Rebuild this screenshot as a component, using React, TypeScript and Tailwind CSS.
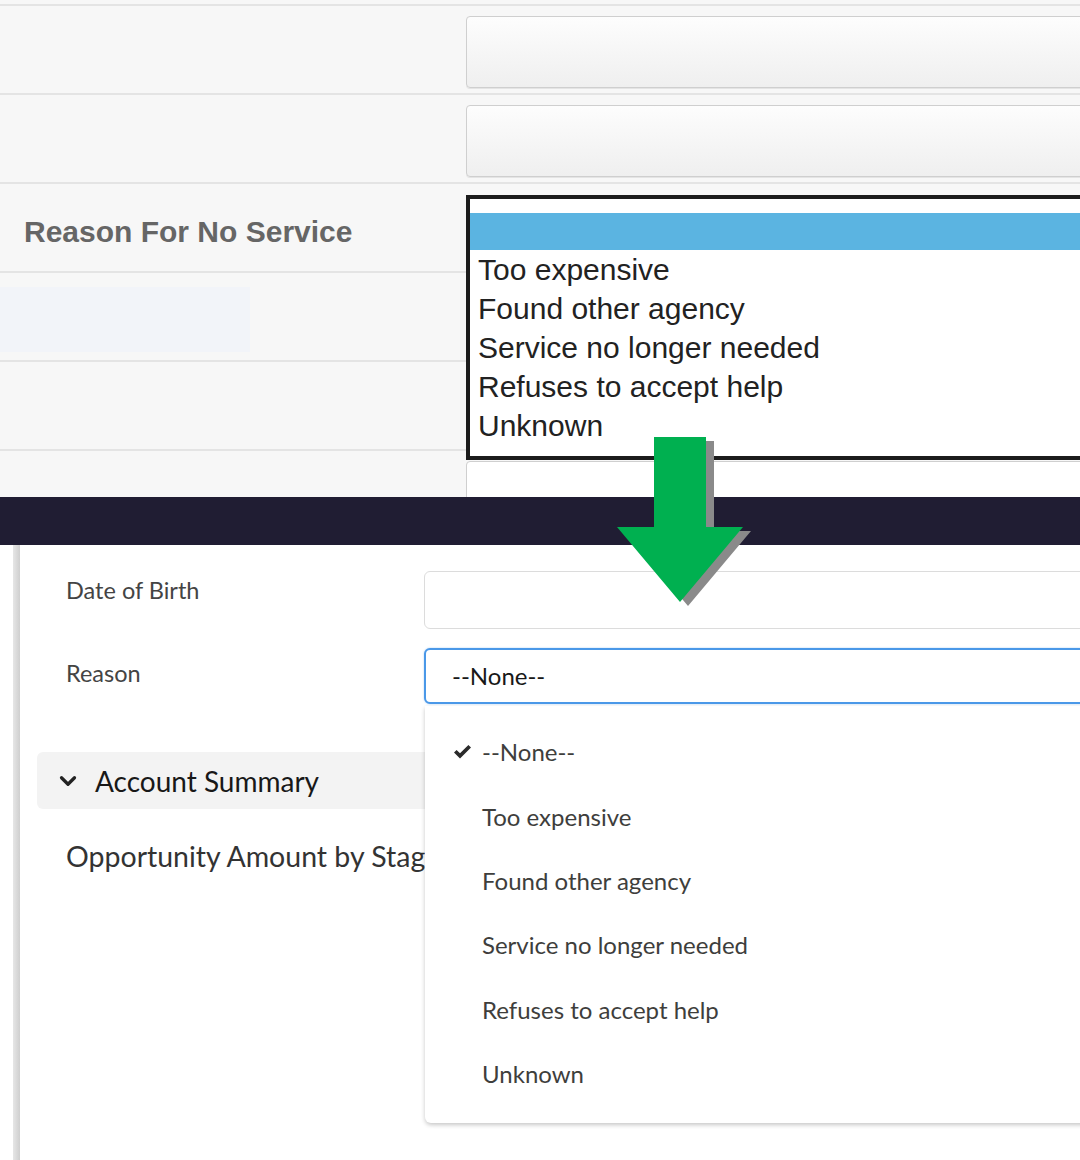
import { ChevronDown } from "lucide-react"

const legacyOptions = ["Too expensive", "Found other agency", "Service no longer needed", "Refuses to accept help", "Unknown"]

function LegacyInput({ white = false }: { white?: boolean }) {
  return (
    <div
      className={`h-[72px] w-[700px] rounded-[4px] border border-[#cfcfcf] shadow-[0_1px_0_#e4e4e4] ${
        white ? "bg-white" : "bg-gradient-to-b from-[#fdfdfd] to-[#efefef]"
      }`}
    />
  )
}

function LegacyRow({ children, label, h = "h-[89px]", last = false }: { children?: React.ReactNode; label?: React.ReactNode; h?: string; last?: boolean }) {
  return (
    <div className={`flex ${h} ${last ? "" : "border-b-2 border-[#e4e4e4]"} overflow-hidden bg-[#f7f7f7]`}>
      <div className="w-[466px] shrink-0">{label}</div>
      <div className="flex-1 pt-[10px]">{children}</div>
    </div>
  )
}

function LegacyForm() {
  return (
    <div className="relative h-[497px] overflow-hidden bg-[#f7f7f7] font-['Liberation_Sans',Arial,sans-serif]">
      <LegacyRow h="h-[6px]" />
      <LegacyRow>
        <LegacyInput />
      </LegacyRow>
      <LegacyRow>
        <LegacyInput />
      </LegacyRow>
      <LegacyRow
        label={
          <div className="flex h-full items-center pl-[24px] pt-[8px] text-[30px] font-bold text-[#666666]">Reason For No Service</div>
        }
      />
      <LegacyRow label={<div className="mt-[14px] h-[65px] w-[250px] bg-[#f2f4f9]" />} />
      <LegacyRow />
      <LegacyRow h="h-[46px]" last>
        <LegacyInput white />
      </LegacyRow>

      {/* open listbox of the old form */}
      <div className="absolute left-[466px] top-[195px] h-[265px] w-[640px] border-[4px] border-[#1c1c1c] bg-white pt-[14px]">
        <div className="h-[37px] bg-[#5bb4e1]" />
        {legacyOptions.map((o) => (
          <div key={o} className="h-[39px] pl-[8px] text-[30px] leading-[39px] text-[#222222]">
            {o}
          </div>
        ))}
      </div>
    </div>
  )
}

function CheckIcon() {
  return (
    <svg width="19" height="16" viewBox="0 0 19 16">
      <path d="M1 8.5 L3.6 6 L7 9.3 L15.4 1 L18 3.5 L7 14.4 Z" fill="#2b2b2b" />
    </svg>
  )
}

const reasons = ["Too expensive", "Found other agency", "Service no longer needed", "Refuses to accept help", "Unknown"]

function LightningForm() {
  return (
    <div className="flex h-[615px] bg-white font-['Lato','Open_Sans',sans-serif]">
      <div className="w-[13px] shrink-0" />
      <div className="w-[7px] shrink-0 bg-gradient-to-r from-[#e6e6e6] to-[#cfcfcf]" />
      <div className="flex-1 pt-[26px]">
        <div className="flex">
          <div className="w-[404px] shrink-0 pl-[46px] pt-[5px] text-[23.5px] leading-[28px] text-[#444444]">Date of Birth</div>
          <div className="h-[58px] w-[700px] rounded-[6px] border border-[#dcdcdc] bg-white" />
        </div>

        <div className="mt-[19px] flex">
          <div className="w-[404px] shrink-0 pl-[46px] pt-[11px] text-[23.5px] leading-[28px] text-[#444444]">Reason</div>
          <div className="relative">
            <div className="flex h-[56px] w-[700px] items-center rounded-[6px] border-2 border-[#4a98e8] bg-white pl-[26px] text-[24px] text-[#181818] shadow-[0_0_2px_#a9cdf3]">
              --None--
            </div>
            <div className="absolute left-[1px] top-[58px] z-10 h-[417px] w-[700px] rounded-b-[6px] bg-white pt-[14px] shadow-[0_2px_4px_rgba(0,0,0,0.22)]">
              <div className="flex h-[64.4px] items-center pl-[28px] text-[24px] text-[#3e3e3c]">
                <CheckIcon />
                <span className="ml-[10px]">--None--</span>
              </div>
              {reasons.map((r) => (
                <div key={r} className="flex h-[64.4px] items-center pl-[57px] text-[24px] text-[#3e3e3c]">
                  {r}
                </div>
              ))}
            </div>
          </div>
        </div>

        <div className="ml-[17px] mt-[48px] flex h-[57px] w-[500px] items-center rounded-[6px] bg-[#f3f3f3] pl-[18px]">
          <ChevronDown className="h-[26px] w-[26px] text-[#222222]" strokeWidth={3} />
          <span className="ml-[14px] text-[28px] text-[#181818]">Account Summary</span>
        </div>

        <div className="ml-[46px] mt-[30px] text-[28.5px] leading-[34px] text-[#333333]">Opportunity Amount by Stage</div>
      </div>
    </div>
  )
}

function DownArrow() {
  const pts = "44,7 96,7 96,97 133,97 70,172 7,97 44,97"
  return (
    <svg className="absolute left-[610px] top-[430px] z-20" width="150" height="185" viewBox="0 0 150 185">
      <polygon points={pts} transform="translate(8,4)" fill="#8a8a8a" />
      <polygon points={pts} fill="#00b050" />
    </svg>
  )
}

export default function App() {
  return (
    <div className="relative h-[1160px] w-[1080px] overflow-hidden bg-white">
      <LegacyForm />
      <div className="h-[48px] bg-[#201d33]" />
      <LightningForm />
      <DownArrow />
    </div>
  )
}
